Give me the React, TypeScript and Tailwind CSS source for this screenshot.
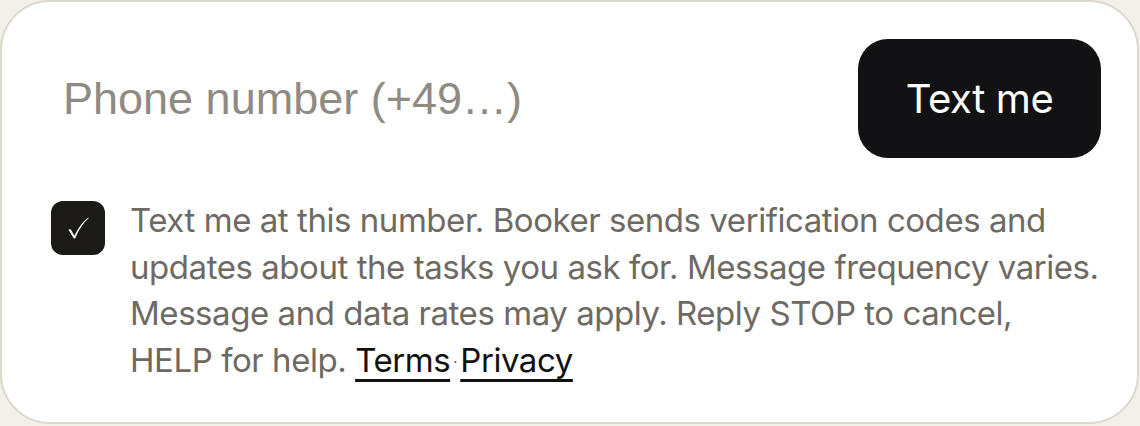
import { useState } from "react";

const Check = () => (
  <svg viewBox="0 0 24 24" className="h-[26px] w-[26px]" fill="#fff">
    <path d="M3.2 13.6 C4.2 13.1 5 13 5.6 13.6 L8.6 19.2 C12 12.4 16 6.6 21.4 2.4 L21.8 2.9 C16.6 7.6 12.6 13.6 9.4 21.4 L8.2 21.6 Z" />
  </svg>
);

const App = () => {
  const [checked, setChecked] = useState(true);
  const [phone, setPhone] = useState("");

  return (
    <div className="h-[426px] w-[1140px] bg-[#f3f0e9]">
      <div className="flex h-[424px] w-[1139px] flex-col rounded-[50px] border-2 border-[#dcd8cd] bg-white pt-[37px] pr-[36px] pl-[36px]">
        <div className="flex items-center">
          <input
            value={phone}
            onChange={(e) => setPhone(e.target.value)}
            placeholder="Phone number (+49…)"
            className="h-[119px] flex-1 bg-transparent pl-[25px] text-[45px] text-[#222] outline-none placeholder:text-[#8f8a82]"
            style={{ fontFamily: '"Liberation Sans", Arial, sans-serif' }}
          />
          <button className="h-[119px] w-[243px] rounded-[30px] bg-[#121214] text-[40px] tracking-[-0.4px] text-white [font-family:Inter,sans-serif]">
            Text me
          </button>
        </div>

        <div className="mt-[39px] flex items-start gap-[25px] pl-[13px]">
          <button
            onClick={() => setChecked(!checked)}
            className="mt-[4px] flex h-[54px] w-[54px] shrink-0 items-center justify-center rounded-[12px] bg-[#1c1a17]"
          >
            {checked && <Check />}
          </button>
          <p className="-mr-[20px] text-[33px] leading-[46.5px] tracking-[-0.45px] text-[#6e6a63] [font-family:Inter,sans-serif]">
            Text me at this number. Booker sends verification codes and
            <br />
            updates about the tasks you ask for. Message frequency varies.
            <br />
            Message and data rates may apply. Reply STOP to cancel,
            <br />
            HELP for help.{" "}
            <a href="#" className="text-[#111] underline decoration-[2.5px] underline-offset-[7px]">
              Terms
            </a>
            <span className="mx-[3px] text-[16px] align-middle">·</span>
            <a href="#" className="text-[#111] underline decoration-[2.5px] underline-offset-[7px]">
              Privacy
            </a>
          </p>
        </div>
      </div>
    </div>
  );
};

export default App;
